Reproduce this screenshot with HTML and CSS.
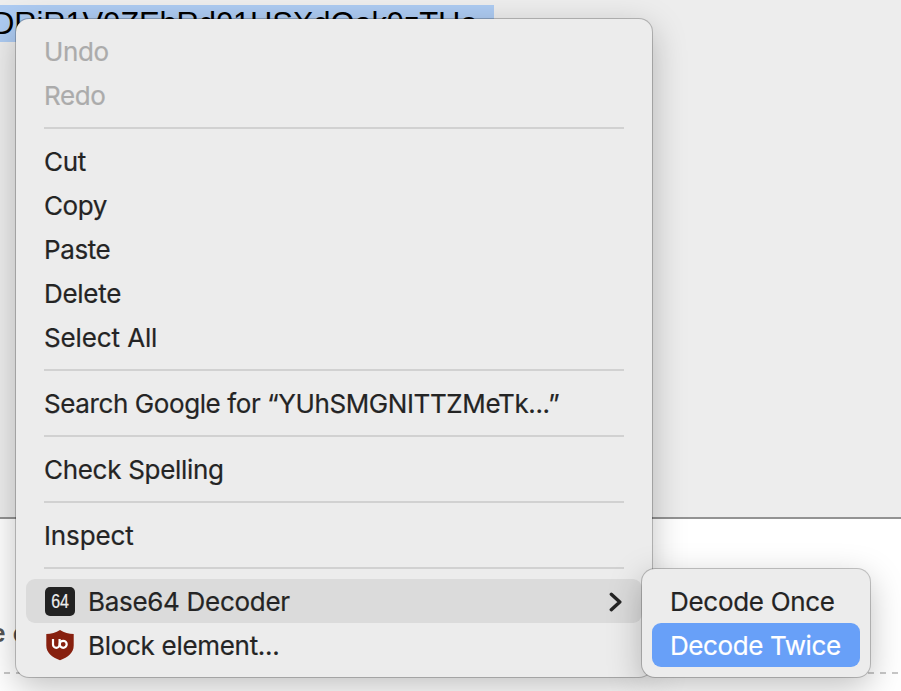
FILE: index.html
```html
<!DOCTYPE html>
<html lang="en">
<head>
<meta charset="utf-8">
<title>Context menu</title>
<link rel="stylesheet" href="styles.css">
</head>
<body>
<div class="page">
  <div class="textarea"><span class="selection">DRjR1V0ZEhRd01HSXdOak9zTHo</span></div>
  <div class="footer"><p class="label">e c</p></div>
</div>
<div class="menu">
  <div class="item disabled"><span class="tight">Undo</span></div>
  <div class="item disabled"><span class="tight">Redo</span></div>
  <hr>
  <div class="item"><span>Cut</span></div>
  <div class="item"><span class="tight">Copy</span></div>
  <div class="item"><span class="tight">Paste</span></div>
  <div class="item"><span>Delete</span></div>
  <div class="item"><span class="loose">Select All</span></div>
  <hr>
  <div class="item"><span class="search">Search Google for “YUhSMGNITTZMeTk...”</span></div>
  <hr>
  <div class="item"><span>Check Spelling</span></div>
  <hr>
  <div class="item"><span class="loose">Inspect</span></div>
  <hr>
  <div class="item open">
    <span class="badge"><span class="badge-text">64</span></span>
    <span>Base64 Decoder</span>
    <svg class="chevron" width="14" height="20" viewBox="0 0 14 20"><path d="M2.300 2.300 10.800 10 2.300 17.700"/></svg>
  </div>
  <div class="item">
    <svg class="shield" width="30" height="32" viewBox="0 0 30 32"><path class="shield-body" d="M16 1C12 3.800 7 5 2.300 5v11.500C2.300 24 8 28 16 31.300 24 28 29.700 24 29.700 16.500V5C25 5 20 3.800 16 1Z"/><path class="shield-mark" d="M9 10v5.500a3.300 3.300 0 0 0 6.600 0V10"/><circle class="shield-mark" cx="19.200" cy="15.300" r="3.500"/></svg>
    <span>Block element...</span>
  </div>
</div>
<div class="menu submenu">
  <div class="item"><span>Decode Once</span></div>
  <div class="item active"><span class="tight">Decode Twice</span></div>
</div>
</body>
</html>
```
FILE: styles.css
```css
* { box-sizing: border-box; }
body { margin: 0; width: 901px; height: 691px; overflow: hidden; background: #fff; font-family: Inter, "Liberation Sans", sans-serif; }
.page { height: 691px; display: flex; flex-direction: column; }
.textarea { height: 519px; padding-top: 5px; background: #ededed; border-bottom: 2px solid #939393; }
.selection { display: block; width: 494px; height: 37px; text-indent: -8px; background: #adcbf2; color: #000; font: 31px/37px "Liberation Sans", sans-serif; letter-spacing: -.15px; white-space: nowrap; overflow: hidden; }
.footer { height: 155px; padding-top: 98px; background: repeating-linear-gradient(90deg, #c8c8c8 0 6px, transparent 6px 12px) 4px 100% / 100% 2px no-repeat; }
.label { margin: 0 0 0 -9px; font: bold 26px/32px "Liberation Sans", sans-serif; color: #555; }
.menu { position: absolute; left: 16px; top: 19px; width: 636px; height: 658px; padding: 10px; border-radius: 13px; background: #ececec; box-shadow: 0 0 0 1px rgba(0,0,0,.22), 0 10px 34px rgba(0,0,0,.25); }
.menu hr { height: 2px; margin: 10px 18px; border: 0; background: #d1d1d1; }
.item { display: flex; align-items: center; height: 44px; padding: 2px 18px 0; border-radius: 9px; font-size: 26px; line-height: 32px; letter-spacing: -.3px; color: #242424; white-space: pre; -webkit-text-stroke: .2px currentColor; }
.tight { letter-spacing: -.4px; }
.loose { letter-spacing: -.12px; }
.search { letter-spacing: -.4px; }
.disabled { color: #ababab; }
.open { background: #dbdbdb; }
.badge { display: flex; align-items: center; justify-content: center; width: 30px; height: 29px; margin: -2px 13px 0 1px; border-radius: 5px; background: #222; }
.badge-text { font: 20px/20px "Liberation Sans", sans-serif; letter-spacing: 0; color: #eee; transform: scaleX(.8); }
.shield { margin: -3px 14px 0 0; }
.shield-body { fill: #87200f; }
.shield-mark { fill: none; stroke: #fff; stroke-width: 2.2; }
.chevron { margin: -1px 1px 0 auto; fill: none; stroke: #242424; stroke-width: 3.4; stroke-linecap: round; stroke-linejoin: round; }
.submenu { left: 642px; top: 569px; width: 228px; height: 108px; }
.active { background: #68a0f8; color: #fff; }
```
